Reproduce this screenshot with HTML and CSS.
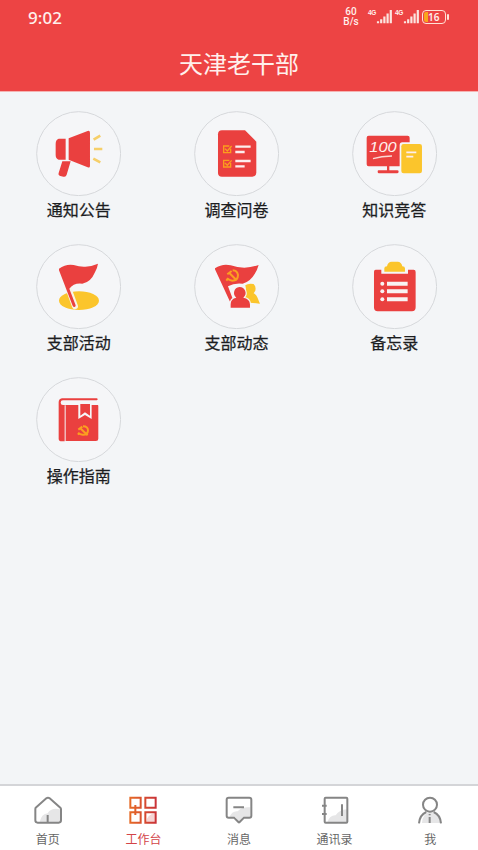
FILE: index.html
```html
<!DOCTYPE html>
<html lang="zh-CN">
<head>
<meta charset="utf-8">
<title>天津老干部</title>
<link rel="stylesheet" href="styles.css">
</head>
<body>
<div class="app">
  <header class="header">
    <div class="status">
      <span class="time">9:02</span>
      <div class="indicators">
        <div class="speed"><span>60</span><span>B/s</span></div>
        <div class="network">
          <span class="gen">4G</span>
          <svg class="signal" viewBox="0 0 16 15"><path class="bars" d="M2 14.2v-2M5.2 14.2v-4M8.4 14.2V7.400M11.600 14.200V4.500M14.800 14.200V1"/></svg>
        </div>
        <div class="network">
          <span class="gen">4G</span>
          <svg class="signal" viewBox="0 0 16 15"><path class="bars" d="M2 14.2v-2M5.2 14.2v-4M8.4 14.2V7.400M11.600 14.200V4.500M14.800 14.200V1"/></svg>
        </div>
        <div class="battery"><span class="charge"></span><span class="percent">16</span></div>
        <span class="battery-tip"></span>
      </div>
    </div>
    <h1 class="title">天津老干部</h1>
  </header>

  <main class="grid">
    <a class="entry">
      <svg class="entry-icon" viewBox="18 19 256 256">
        <circle class="ring" cx="146" cy="147" r="126"/>
        <path class="red" d="M86 102h21v63H86q-9-3-9-14v-34q0-12 9-15ZM116 101l57-22q7-2 7 5v100q0 7-7 4l-57-23ZM97 170h25l-12 40q-2 8-10 6l-9-2q-7-2-5-9Z"/>
        <path class="ray" d="M191 105l20-12M192 133h25M190 162l21 11"/>
      </svg>
      <span class="entry-label">通知公告</span>
    </a>
    <a class="entry">
      <svg class="entry-icon" viewBox="18 19 256 256">
        <circle class="ring" cx="146" cy="147" r="126"/>
        <path class="red" d="M102 77h69l34 34v93q0 12-12 12h-91q-12 0-12-12V89q0-12 12-12Z"/>
        <path class="check" d="M124 124h-17v20h21v-12M111 132l7 7 13-15M124 167h-17v20h21v-12M111 175l7 7 13-15"/>
        <path class="line" d="M142 126h46M142 142h28M142 169h46M142 185h28"/>
      </svg>
      <span class="entry-label">调查问卷</span>
    </a>
    <a class="entry">
      <svg class="entry-icon" viewBox="21 19 256 256">
        <circle class="ring" cx="149" cy="147" r="126"/>
        <path class="red" d="M71 93h117q6 0 6 6v14h-22q-8 0-8 9v63h-31v12h24q4 0 4 4t-4 5h-55q-4 0-4-5t4-4h24v-12H71q-6 0-6-6V99q0-6 6-6Z"/>
        <text class="score" x="73" y="143" textLength="82" lengthAdjust="spacingAndGlyphs">100</text>
        <path class="underline" d="M84 162q25-7 57-8"/>
        <rect class="yellow" x="169" y="118" width="62" height="88" rx="7"/>
        <path class="line thin" d="M184 143h30M184 156h21"/>
      </svg>
      <span class="entry-label">知识竞答</span>
    </a>
    <a class="entry">
      <svg class="entry-icon" viewBox="18 18 256 256">
        <circle class="ring" cx="146" cy="146" r="126"/>
        <ellipse class="yellow" cx="147" cy="188" rx="60" ry="28"/>
        <path class="pole-gap" d="M113 145l22 60"/>
        <path class="red" d="M87 92q21-15 44-11 19 6 35 5 20-1 38-9-2 14-9 26-13 31-38 34-26-3-39 15l19 50q1 4-3 5-4 1-6-4L87 97Z"/>
      </svg>
      <span class="entry-label">支部活动</span>
    </a>
    <a class="entry">
      <svg class="entry-icon" viewBox="18 18 256 256">
        <circle class="ring" cx="146" cy="146" r="126"/>
        <path class="yellow" d="M172 142q8-7 25-4 8 8 5 20l-5 8q8 4 11 12l8 19-30-3q-3-9-12-14l-6-4q9-14 4-34Z"/>
        <path class="red" d="M81 91q22-15 47-9 20 7 41 7 23-1 43-8-4 15-12 27-13 23-36 29-25-3-44 8l22 58q2 6-3 6-5 1-7-5L81 94Z"/>
        <path class="person" d="M154 147a18 18 0 0 1 12 32q19 3 20 20v10h-58v-10q0-17 17-20a18 18 0 0 1 9-32Z"/>
        <g class="emblem">
          <path d="M134 97q14 1 16 14 0 17-17 17-9-1-16-7"/>
          <path d="M118 109l13-10M124 105l22 22M120 122l-5 6"/>
        </g>
      </svg>
      <span class="entry-label">支部动态</span>
    </a>
    <a class="entry">
      <svg class="entry-icon" viewBox="21 18 256 256">
        <circle class="ring" cx="149" cy="146" r="126"/>
        <path class="red" d="M92 95h17v12h80V95h17q6 0 6 7v106q0 12-11 12H98q-11 0-11-12v-106q0-7 5-7Z"/>
        <path class="yellow" d="M118 101V91q0-6 8-6 3-14 14-14h18q11 0 14 14 8 0 8 6v10Z"/>
        <path class="list" d="M126 137h62M126 160h62M126 184h62"/>
        <g class="dot"><circle cx="112" cy="137" r="6"/><circle cx="112" cy="160" r="6"/><circle cx="112" cy="184" r="6"/></g>
      </svg>
      <span class="entry-label">备忘录</span>
    </a>
    <a class="entry">
      <svg class="entry-icon" viewBox="18 20 256 256">
        <circle class="ring" cx="146" cy="148" r="126"/>
        <path class="red" d="M98 84h102q3 0 3 3t-3 3H99q-7 0-7 7t7 7h46v42l20-12 20 12v-42h18q2 0 2 3v98q0 7-7 7h-91V105h-3v108h-8q-10 0-10-8V96q0-10 10-12Z"/>
        <path class="red" d="M151 101h29v35l-15-10-14 10Z"/>
        <g class="emblem">
          <path d="M159 168q16 0 15 13-1 13-16 12-8-1-13-5"/>
          <path d="M145 178l12-9M151 174l22 21M148 188l-4 5"/>
        </g>
      </svg>
      <span class="entry-label">操作指南</span>
    </a>
  </main>

  <nav class="tabs">
    <a class="tab">
      <svg class="tab-icon" viewBox="95 42 96 96">
        <path class="shade" d="M118 126q6-25 24-26 10-18 37-12v38Z"/>
        <path class="stroke" d="M106 83l32-28q5-4 10 0l32 28q2 2 2 5v33q0 7-7 7h-63q-7 0-7-7V88q0-3 1-5ZM142 105v22"/>
      </svg>
      <span>首页</span>
    </a>
    <a class="tab active">
      <svg class="tab-icon" viewBox="382 42 96 96">
        <defs><linearGradient id="warm" gradientUnits="userSpaceOnUse" x1="390" y1="0" x2="470" y2="0"><stop offset="0" stop-color="#e66b27"/><stop offset="1" stop-color="#c93238"/></linearGradient></defs>
        <path class="blush" d="M439 128q3-26 29-30v30Z"/>
        <path class="stroke warm" d="M392 53h31v30h-31ZM437 53h31v30h-31ZM392 97h31v31h-31ZM437 97h31v31h-31ZM407 75v30"/>
      </svg>
      <span>工作台</span>
    </a>
    <a class="tab">
      <svg class="tab-icon" viewBox="669 42 96 96">
        <path class="shade" d="M688 112q8-20 25-18 14-15 38-12v30h-19l-14 14-12-14Z"/>
        <path class="stroke" d="M686 53h62q6 0 6 6v48q0 6-6 6h-16l-13 13q-2 2-4 0l-13-13h-16q-6 0-6-6V59q0-6 6-6ZM700 82h32"/>
      </svg>
      <span>消息</span>
    </a>
    <a class="tab">
      <svg class="tab-icon" viewBox="242 42 96 96">
        <path class="shade" d="M267 127q7-22 25-21 11-17 34-18v39Z"/>
        <path class="stroke" d="M262 53h62q3 0 3 3v69q0 3-3 3h-62q-3 0-3-3V56q0-3 3-3ZM251 77h14M251 102h14M311 73v35"/>
      </svg>
      <span>通讯录</span>
    </a>
    <a class="tab">
      <svg class="tab-icon" viewBox="528 42 96 96">
        <path class="shade" d="M552 129q2-31 27-34 26 5 29 34Z"/>
        <circle class="stroke" cx="576" cy="74" r="21"/>
        <path class="stroke" d="M543 130q2-25 22-34M587 96q20 9 22 34M575 111v18M575 102v4"/>
      </svg>
      <span>我</span>
    </a>
  </nav>
</div>
</body>
</html>
```
FILE: styles.css
```css
* {
  box-sizing: border-box;
}

body {
  margin: 0;
  font-family: "Noto Sans CJK SC", sans-serif;
}

.app {
  display: flex;
  flex-direction: column;
  width: 478px;
  height: 850px;
  overflow: hidden;
  background: #f3f5f7;
}

.header {
  flex: none;
  height: 92px;
  background: #ed4444;
  border-bottom: 1px solid #f5b3b2;
  color: #fff0ec;
}

.status {
  display: flex;
  justify-content: space-between;
  align-items: center;
  height: 36px;
  padding: 0 29px 0 28px;
}

.time {
  font: 500 17px/20px "Noto Sans", sans-serif;
  letter-spacing: 0.1px;
}

.indicators {
  display: flex;
  align-items: center;
  margin-top: -3px;
}

.speed {
  display: flex;
  flex-direction: column;
  align-items: center;
  width: 18px;
  margin-right: 8px;
  font: 500 10px/10px Roboto, sans-serif;
}

.speed span {
  height: 10px;
}

.network {
  display: flex;
  align-items: flex-start;
  width: 27px;
}

.gen {
  width: 8px;
  font: 700 6.5px/7px "Liberation Sans", sans-serif;
  letter-spacing: -0.3px;
}

.signal {
  width: 16px;
  height: 15px;
}

.bars {
  fill: none;
  stroke: #fbe5df;
  stroke-width: 2.2;
}

.battery {
  display: flex;
  align-items: center;
  width: 24px;
  height: 14px;
  padding: 1px;
  border: 1.5px solid #ffe2d5;
  border-radius: 4px;
}

.charge {
  width: 4px;
  height: 10px;
  border-radius: 2px 0 0 2px;
  background: #f9a51b;
}

.percent {
  font: 600 10px/10px "Noto Sans", sans-serif;
}

.battery-tip {
  width: 2px;
  height: 6px;
  margin-left: 1px;
  border-radius: 1px;
  background: #ffe2d5;
}

.title {
  margin: 9px 0 0;
  font-size: 24px;
  font-weight: 400;
  line-height: 36px;
  text-align: center;
}

.grid {
  flex: 1;
  display: grid;
  grid-template-columns: repeat(3, 157.7px);
  grid-auto-rows: 132.8px;
  align-content: start;
  padding-top: 19px;
}

.entry {
  display: flex;
  flex-direction: column;
  align-items: center;
}

.entry-icon {
  width: 85.3px;
  height: 85.3px;
}

.entry-label {
  margin-top: 1px;
  color: #1c1d1f;
  font-size: 16px;
  font-weight: 400;
  line-height: 24px;
  -webkit-text-stroke: 0.25px #1c1d1f;
}

.ring {
  fill: #f5f6f8;
  stroke: #d6d8db;
  stroke-width: 3;
}

.red {
  fill: #ea403f;
}

.yellow {
  fill: #fbc52c;
}

.ray {
  fill: none;
  stroke: #f6cf69;
  stroke-width: 8;
}

.check {
  fill: none;
  stroke: #fb9d1d;
  stroke-width: 4;
}

.line {
  fill: none;
  stroke: #fdeeee;
  stroke-width: 7;
}

.thin {
  stroke-width: 5;
}

.score {
  fill: #fff1ee;
  font: italic 500 43px "Liberation Sans", sans-serif;
}

.underline {
  fill: none;
  stroke: #fbd9d5;
  stroke-width: 4;
}

.pole-gap {
  fill: none;
  stroke: #f8f3e7;
  stroke-width: 18;
  stroke-linecap: round;
}

.person {
  fill: #ea403f;
  stroke: #f5f6f8;
  stroke-width: 7;
  paint-order: stroke;
}

.emblem {
  fill: none;
  stroke: #fb9f20;
  stroke-width: 6;
}

.list {
  fill: none;
  stroke: #f8f3f3;
  stroke-width: 12;
}

.dot {
  fill: #f8f3f3;
}

.tabs {
  flex: none;
  display: grid;
  grid-template-columns: repeat(5, 1fr);
  height: 66px;
  border-top: 2px solid #d4d5d8;
  background: #fff;
}

.tab {
  display: flex;
  flex-direction: column;
  align-items: center;
  padding-top: 8px;
  color: #666;
  font-size: 12px;
  line-height: 18px;
}

.active {
  color: #d34447;
}

.tab-icon {
  width: 32px;
  height: 32px;
  margin-bottom: 4px;
}

.stroke {
  fill: none;
  stroke: #858585;
  stroke-width: 6;
}

.warm {
  stroke: url(#warm);
}

.shade {
  fill: #e6e6e7;
}

.blush {
  fill: #f6d5d5;
}
```
